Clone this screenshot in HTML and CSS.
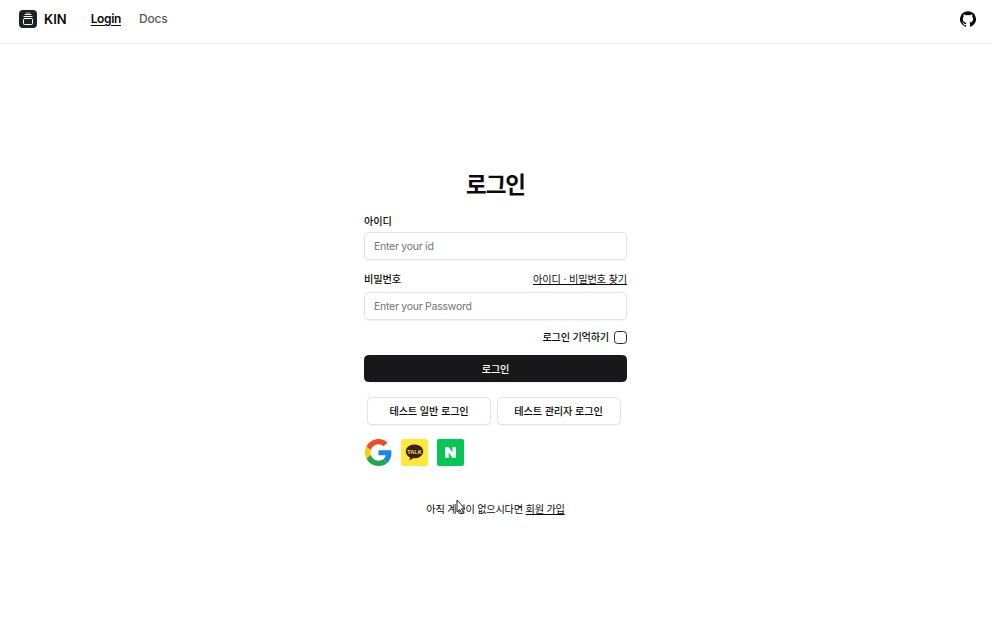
FILE: index.html
```html
<!DOCTYPE html>
<html lang="ko">
<head>
<meta charset="utf-8">
<title>KIN</title>
<link rel="stylesheet" href="styles.css">
</head>
<body>
<header class="header">
  <a class="brand">
    <svg class="brand-icon" viewBox="0 0 18 18"><rect width="18" height="18" rx="4" fill="#202124"/><g fill="none" stroke="#fff" stroke-linecap="round"><rect x="4.500" y="8.500" width="9" height="6" rx="1"/><path d="M5 6.500h8M6 4.500h6" stroke-width="1"/><path d="M7 3h4" stroke-width=".6"/></g></svg>
    <span>KIN</span>
  </a>
  <nav class="nav"><a class="active">Login</a><a>Docs</a></nav>
  <svg class="github" viewBox="0 0 24 24"><path fill="#0a0a0a" d="M12 .3a12 12 0 0 0-3.8 23.4c.6.1.8-.3.8-.6v-2c-3.3.7-4-1.6-4-1.6-.6-1.4-1.4-1.8-1.4-1.8-1-.7.1-.7.1-.7 1.2 0 1.9 1.2 1.9 1.2 1 1.8 2.8 1.3 3.5 1 0-.8.4-1.3.7-1.6-2.7-.3-5.5-1.3-5.5-6 0-1.2.5-2.3 1.3-3.1-.2-.4-.6-1.6 0-3.2 0 0 1-.3 3.4 1.2a11.5 11.5 0 0 1 6 0c2.3-1.5 3.3-1.2 3.3-1.2.6 1.6.2 2.8 0 3.2.9.8 1.3 1.9 1.3 3.2 0 4.6-2.8 5.6-5.5 5.9.5.4.9 1.1.9 2.2v3.3c0 .3.1.7.8.6A12 12 0 0 0 12 .3"/></svg>
</header>
<main class="main">
  <form class="form">
    <h1 class="title">로그인</h1>
    <div class="row"><label for="uid">아이디</label></div>
    <input class="input" id="uid" type="text" placeholder="Enter your id">
    <div class="row row-password"><label for="pw">비밀번호</label><a class="link">아이디 · 비밀번호 찾기</a></div>
    <input class="input" id="pw" type="password" placeholder="Enter your Password">
    <div class="remember"><label for="remember">로그인 기억하기</label><input class="checkbox" id="remember" type="checkbox"></div>
    <button class="button primary" type="button">로그인</button>
    <div class="tests"><button class="button" type="button">테스트 일반 로그인</button><button class="button" type="button">테스트 관리자 로그인</button></div>
    <div class="social">
      <svg viewBox="0 0 48 48"><path fill="#fbd00a" d="M10.5 28.6a14.6 14.6 0 0 1 0-9.2l-8-6.2a24 24 0 0 0 0 21.6z"/><path fill="#f04b28" d="M24 9.5c3.5 0 6.7 1.2 9.2 3.6l6.9-6.9A24 24 0 0 0 2.5 13.2l8 6.2C12.400 13.700 17.700 9.500 24 9.500z"/><path fill="#1686e8" d="M47 24.600c0-1.600-.2-3.100-.4-4.600H24v9h12.900c-.6 3-2.200 5.500-4.700 7.200l7.700 6C44.400 38 47 32 47 24.600z"/><path fill="#21a84a" d="M24 48c6.500 0 12-2.100 15.900-5.800l-7.700-6c-2.200 1.500-4.900 2.300-8.200 2.300-6.300 0-11.600-4.200-13.500-9.900l-8 6.200A24 24 0 0 0 24 48z"/></svg>
      <svg viewBox="0 0 27 27"><rect width="27" height="27" rx="2.500" fill="#fee93a"/><path fill="#3b1e1e" d="M13.500 5.600c-5 0-8.700 3-8.700 6.900 0 2.600 1.700 4.800 4.300 6l-.8 3.100 3.700-2.400 1.500.1c5 0 8.700-3 8.700-6.800s-3.700-6.900-8.700-6.900z"/><text x="13.500" y="14.500" text-anchor="middle" class="talk">TALK</text></svg>
      <svg viewBox="0 0 27 27"><rect width="27" height="27" rx="2" fill="#06c755"/><path fill="#fff" d="M8 8h3.700l3.700 5.400V8H19v11h-3.600l-3.700-5.500V19H8z"/></svg>
    </div>
    <p class="signup">아직 계정이 없으시다면 <a class="link">회원 가입</a></p>
  </form>
</main>
<svg class="cursor" viewBox="0 0 10 16"><path d="M1 1v12l2.700-2.500 2 4.300 1.800-.8-1.900-4.200h3.300z" fill="#fff" stroke="#111" stroke-width=".9"/></svg>
</body>
</html>
```
FILE: styles.css
```css
* { box-sizing: border-box; }
body {
  margin: 0;
  background: #fff;
  color: #0a0a0a;
  font-family: Inter, "Noto Sans CJK KR", sans-serif;
  font-size: 10.2px;
  line-height: 14px;
}
.header {
  display: flex;
  align-items: center;
  height: 44px;
  padding: 0 16px 5px 19px;
  border-bottom: 1px solid #ececed;
  font-size: 12px;
}
.brand { display: flex; align-items: center; gap: 7px; font-weight: 600; font-size: 13px; }
.brand-icon { width: 18px; height: 18px; }
.nav { display: flex; gap: 18px; margin-left: 24px; font-weight: 500; color: #57575a; letter-spacing: -.2px; }
.nav .active { color: #0a0a0a; text-decoration: underline; text-underline-offset: 2px; font-weight: 600; letter-spacing: -.35px; }
.github { width: 16px; height: 16px; margin-left: auto; }
.main { display: flex; justify-content: center; padding: 127px 1px 0 0; }
.form { width: 263px; display: flex; flex-direction: column; }
.title {
  margin: 0 0 16px;
  text-align: center;
  font-size: 22.500px;
  font-weight: 700;
  line-height: 27px;
  letter-spacing: -1.100px;
}
.row { display: flex; justify-content: space-between; height: 14px; margin-bottom: 4px; letter-spacing: -.15px; font-weight: 500; }
.row-password { margin: 12px 0 6px; }
.row .link { font-weight: 400; }
.link { text-decoration: underline; text-underline-offset: 1px; }
.input {
  width: 100%;
  height: 28px;
  padding: 0 9px;
  border: 1px solid #e4e4e7;
  border-radius: 4.500px;
  box-shadow: 0 1px 1px rgba(0, 0, 0, .05);
  font: 10.500px Inter, sans-serif;
  letter-spacing: -.26px;
}
.input::placeholder { color: #71717a; opacity: 1; }
.remember { display: flex; justify-content: flex-end; align-items: center; gap: 5px; height: 14px; margin: 10px 0 11px; letter-spacing: -.22px; }
.remember label { font-weight: 500; }
.checkbox { appearance: none; width: 13px; height: 13px; margin: 1px 0 0; border: 1px solid #29292c; border-radius: 3.500px; }
.button {
  height: 28px;
  padding: 0 0 2px;
  border: 1px solid #e4e4e7;
  border-radius: 4.500px;
  background: #fff;
  color: #0a0a0a;
  box-shadow: 0 1px 1px rgba(0, 0, 0, .05);
  font: 500 10.200px "Noto Sans CJK KR", sans-serif;
  letter-spacing: -.15px;
}
.primary { background: #18181b; border-color: #18181b; color: #fff; height: 27px; padding: 0; }
.tests { display: grid; grid-template-columns: 124px 124px; gap: 5.500px; margin: 15px 0 14px 3px; }
.social { display: flex; gap: 9px; height: 27px; padding-left: .5px; }
.social svg { width: 27px; height: 27px; }
.talk { fill: #fee92f; font: 700 5.500px "Liberation Sans", sans-serif; }
.signup { margin: 36px 0 0; text-align: center; letter-spacing: -.24px; }
.cursor { position: absolute; left: 456px; top: 499px; width: 10px; height: 16px; }
```
